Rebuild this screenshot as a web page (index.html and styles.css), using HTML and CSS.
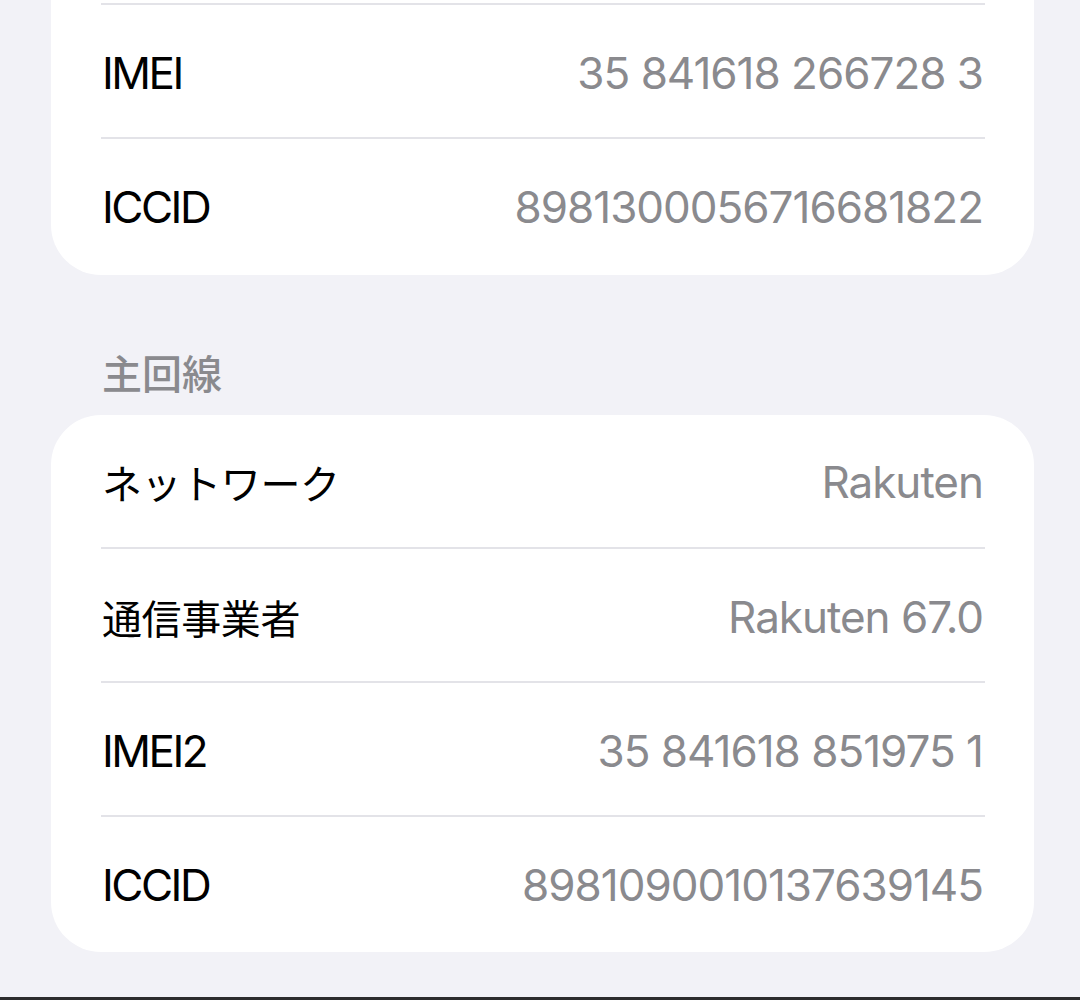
FILE: index.html
```html
<!DOCTYPE html>
<html lang="ja">
<head>
	<meta charset="utf-8">
	<title>情報</title>
	<link rel="stylesheet" href="styles.css">
</head>
<body>

<div class="page">
	<div class="card cut">
		<div class="row">
			<span class="label">IMEI</span>
			<span class="value">35 841618 266728 3</span>
		</div>
		<div class="row">
			<span class="label">ICCID</span>
			<span class="value">8981300056716681822</span>
		</div>
	</div>

	<div class="section">主回線</div>

	<div class="card">
		<div class="row">
			<span class="label ja">ネットワーク</span>
			<span class="value">Rakuten</span>
		</div>
		<div class="row">
			<span class="label ja">通信事業者</span>
			<span class="value">Rakuten 67.0</span>
		</div>
		<div class="row">
			<span class="label">IMEI2</span>
			<span class="value">35 841618 851975 1</span>
		</div>
		<div class="row">
			<span class="label">ICCID</span>
			<span class="value">8981090010137639145</span>
		</div>
	</div>
</div>

<div class="edge"></div>

</body>
</html>
```

FILE: styles.css
```css
body {
	margin: 0;
	background: #f2f2f7;
	font-family: Inter, "Noto Sans CJK JP", sans-serif;
	color: #000;
}

.page {
	height: 997px;
	overflow: hidden;
	padding: 0 46px 0 51px;
}

.card {
	background: #fff;
	border-radius: 50px;
	padding-bottom: 3px;
}

.card.cut {
	border-radius: 0 0 50px 50px;
	padding-top: 3px;
	padding-bottom: 4px;
}

.row {
	box-sizing: border-box;
	height: 134px;
	margin: 0 49px 0 50px;
	padding: 4px 2px 0 1px;
	display: flex;
	align-items: center;
	justify-content: space-between;
	font-size: 44px;
	border-top: 2px solid #e3e3e8;
}

.card .row:first-child {
	height: 132px;
	padding-top: 2px;
	border-top: 0;
}

.card.cut .row:first-child {
	height: 134px;
	padding-top: 4px;
	border-top: 2px solid #e3e3e8;
}

.label {
	letter-spacing: -2.5px;
}

.label.ja {
	font-family: "Noto Sans CJK JP", sans-serif;
	font-size: 40px;
	letter-spacing: -0.4px;
}

.value {
	color: #8a8a8e;
	letter-spacing: -1px;
}

.section {
	margin: 73px 0 19px 51px;
	font-family: "Noto Sans CJK JP", sans-serif;
	font-size: 40px;
	line-height: 48px;
	font-weight: 500;
	color: #8a8a8e;
}

.edge {
	height: 3px;
	background: #2c2c2e;
}
```
